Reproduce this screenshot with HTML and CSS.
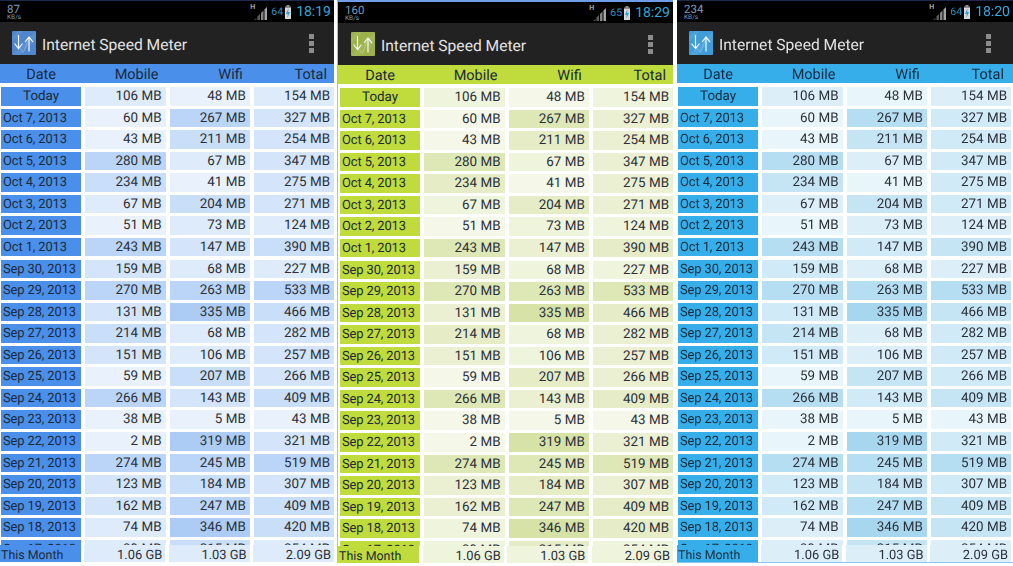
FILE: index.html
```html
<!DOCTYPE html>
<html lang="en">
<head>
<meta charset="utf-8">
<title>Internet Speed Meter</title>
<link rel="stylesheet" href="styles.css">
</head>
<body>
<svg class="defs" width="0" height="0" aria-hidden="true">
  <symbol id="app" viewBox="0 0 24 24">
    <rect class="app-bg" width="24" height="24" rx="1"/>
    <path class="app-tex" d="M0 24 24 0V8L8 24zM0 6 6 0h5L0 11z"/>
    <path class="app-thin" d="M6.500 16 11.500 21.500 17 7 21.500 12"/>
    <path class="app-arrow" d="M6.500 4V17.500M2.500 12.500 6.500 17.500 10.500 12.500M17 20.500V6M13 11 17 6 21 11"/>
  </symbol>
  <symbol id="signal" viewBox="0 0 14 14">
    <path class="sig1" d="M0 14 2.500 11.500V14z"/>
    <path class="sig2" d="M3.500 14V10.500L6 8V14z"/>
    <path class="sig3" d="M7 14V7L9.500 4.500V14z"/>
    <path class="sig4" d="M10.500 14V3.500L13 1V14z"/>
  </symbol>
  <symbol id="battery" viewBox="0 0 6 14">
    <path class="bat-top" d="M0 3V1.500H1.500V0H4.500V1.500H6V3z"/>
    <rect class="bat-body" y="3" width="6" height="11"/>
    <path class="bat-bolt" d="M3.500 3 1 9H2.800L2.300 13 5 7H3.200z"/>
  </symbol>
</svg>

<main class="screens">

<section class="phone theme-blue">
  <div class="status"><div class="speed"><b>87</b><small>KB/s</small></div><div class="status-right"><span class="net">H</span><svg class="signal"><use href="#signal"/></svg><span class="pct">64</span><svg class="battery"><use href="#battery"/></svg><span class="clock">18:19</span></div></div>
  <header class="bar"><svg class="app-icon"><use href="#app"/></svg><h1>Internet Speed Meter</h1><div class="more"><i></i><i></i><i></i></div></header>
  <div class="cols"><span class="c-date">Date</span><span>Mobile</span><span>Wifi</span><span>Total</span></div>
  <div class="list">
    <div class="row"><span class="d today">Today</span><span class="l2">106 MB</span><span class="l1">48 MB</span><span class="l2">154 MB</span></div>
    <div class="row"><span class="d">Oct 7, 2013</span><span class="l1">60 MB</span><span class="l5">267 MB</span><span class="l3">327 MB</span></div>
    <div class="row"><span class="d">Oct 6, 2013</span><span class="l1">43 MB</span><span class="l4">211 MB</span><span class="l3">254 MB</span></div>
    <div class="row"><span class="d">Oct 5, 2013</span><span class="l5">280 MB</span><span class="l2">67 MB</span><span class="l3">347 MB</span></div>
    <div class="row"><span class="d">Oct 4, 2013</span><span class="l4">234 MB</span><span class="l1">41 MB</span><span class="l3">275 MB</span></div>
    <div class="row"><span class="d">Oct 3, 2013</span><span class="l2">67 MB</span><span class="l4">204 MB</span><span class="l3">271 MB</span></div>
    <div class="row"><span class="d">Oct 2, 2013</span><span class="l1">51 MB</span><span class="l2">73 MB</span><span class="l2">124 MB</span></div>
    <div class="row"><span class="d">Oct 1, 2013</span><span class="l5">243 MB</span><span class="l3">147 MB</span><span class="l4">390 MB</span></div>
    <div class="row"><span class="d">Sep 30, 2013</span><span class="l3">159 MB</span><span class="l2">68 MB</span><span class="l2">227 MB</span></div>
    <div class="row"><span class="d">Sep 29, 2013</span><span class="l5">270 MB</span><span class="l5">263 MB</span><span class="l5">533 MB</span></div>
    <div class="row"><span class="d">Sep 28, 2013</span><span class="l3">131 MB</span><span class="l6">335 MB</span><span class="l4">466 MB</span></div>
    <div class="row"><span class="d">Sep 27, 2013</span><span class="l4">214 MB</span><span class="l2">68 MB</span><span class="l3">282 MB</span></div>
    <div class="row"><span class="d">Sep 26, 2013</span><span class="l3">151 MB</span><span class="l2">106 MB</span><span class="l3">257 MB</span></div>
    <div class="row"><span class="d">Sep 25, 2013</span><span class="l1">59 MB</span><span class="l4">207 MB</span><span class="l3">266 MB</span></div>
    <div class="row"><span class="d">Sep 24, 2013</span><span class="l5">266 MB</span><span class="l3">143 MB</span><span class="l4">409 MB</span></div>
    <div class="row"><span class="d">Sep 23, 2013</span><span class="l1">38 MB</span><span class="l1">5 MB</span><span class="l1">43 MB</span></div>
    <div class="row"><span class="d">Sep 22, 2013</span><span class="l1">2 MB</span><span class="l6">319 MB</span><span class="l3">321 MB</span></div>
    <div class="row"><span class="d">Sep 21, 2013</span><span class="l5">274 MB</span><span class="l5">245 MB</span><span class="l5">519 MB</span></div>
    <div class="row"><span class="d">Sep 20, 2013</span><span class="l3">123 MB</span><span class="l4">184 MB</span><span class="l3">307 MB</span></div>
    <div class="row"><span class="d">Sep 19, 2013</span><span class="l3">162 MB</span><span class="l5">247 MB</span><span class="l4">409 MB</span></div>
    <div class="row"><span class="d">Sep 18, 2013</span><span class="l2">74 MB</span><span class="l6">346 MB</span><span class="l4">420 MB</span></div>
    <div class="row"><span class="d">Sep 17, 2013</span><span class="l2">39 MB</span><span class="l4">215 MB</span><span class="l2">254 MB</span></div>
  </div>
  <footer class="sum"><span class="d">This Month</span><span>1.06 GB</span><span>1.03 GB</span><span>2.09 GB</span></footer>
</section>

<section class="phone theme-green">
  <div class="status"><div class="speed"><b>160</b><small>KB/s</small></div><div class="status-right"><span class="net">H</span><svg class="signal"><use href="#signal"/></svg><span class="pct">65</span><svg class="battery"><use href="#battery"/></svg><span class="clock">18:29</span></div></div>
  <header class="bar"><svg class="app-icon"><use href="#app"/></svg><h1>Internet Speed Meter</h1><div class="more"><i></i><i></i><i></i></div></header>
  <div class="cols"><span class="c-date">Date</span><span>Mobile</span><span>Wifi</span><span>Total</span></div>
  <div class="list">
    <div class="row"><span class="d today">Today</span><span class="l2">106 MB</span><span class="l1">48 MB</span><span class="l2">154 MB</span></div>
    <div class="row"><span class="d">Oct 7, 2013</span><span class="l1">60 MB</span><span class="l5">267 MB</span><span class="l3">327 MB</span></div>
    <div class="row"><span class="d">Oct 6, 2013</span><span class="l1">43 MB</span><span class="l4">211 MB</span><span class="l3">254 MB</span></div>
    <div class="row"><span class="d">Oct 5, 2013</span><span class="l5">280 MB</span><span class="l2">67 MB</span><span class="l3">347 MB</span></div>
    <div class="row"><span class="d">Oct 4, 2013</span><span class="l4">234 MB</span><span class="l1">41 MB</span><span class="l3">275 MB</span></div>
    <div class="row"><span class="d">Oct 3, 2013</span><span class="l2">67 MB</span><span class="l4">204 MB</span><span class="l3">271 MB</span></div>
    <div class="row"><span class="d">Oct 2, 2013</span><span class="l1">51 MB</span><span class="l2">73 MB</span><span class="l2">124 MB</span></div>
    <div class="row"><span class="d">Oct 1, 2013</span><span class="l5">243 MB</span><span class="l3">147 MB</span><span class="l4">390 MB</span></div>
    <div class="row"><span class="d">Sep 30, 2013</span><span class="l3">159 MB</span><span class="l2">68 MB</span><span class="l2">227 MB</span></div>
    <div class="row"><span class="d">Sep 29, 2013</span><span class="l5">270 MB</span><span class="l5">263 MB</span><span class="l5">533 MB</span></div>
    <div class="row"><span class="d">Sep 28, 2013</span><span class="l3">131 MB</span><span class="l6">335 MB</span><span class="l4">466 MB</span></div>
    <div class="row"><span class="d">Sep 27, 2013</span><span class="l4">214 MB</span><span class="l2">68 MB</span><span class="l3">282 MB</span></div>
    <div class="row"><span class="d">Sep 26, 2013</span><span class="l3">151 MB</span><span class="l2">106 MB</span><span class="l3">257 MB</span></div>
    <div class="row"><span class="d">Sep 25, 2013</span><span class="l1">59 MB</span><span class="l4">207 MB</span><span class="l3">266 MB</span></div>
    <div class="row"><span class="d">Sep 24, 2013</span><span class="l5">266 MB</span><span class="l3">143 MB</span><span class="l4">409 MB</span></div>
    <div class="row"><span class="d">Sep 23, 2013</span><span class="l1">38 MB</span><span class="l1">5 MB</span><span class="l1">43 MB</span></div>
    <div class="row"><span class="d">Sep 22, 2013</span><span class="l1">2 MB</span><span class="l6">319 MB</span><span class="l3">321 MB</span></div>
    <div class="row"><span class="d">Sep 21, 2013</span><span class="l5">274 MB</span><span class="l5">245 MB</span><span class="l5">519 MB</span></div>
    <div class="row"><span class="d">Sep 20, 2013</span><span class="l3">123 MB</span><span class="l4">184 MB</span><span class="l3">307 MB</span></div>
    <div class="row"><span class="d">Sep 19, 2013</span><span class="l3">162 MB</span><span class="l5">247 MB</span><span class="l4">409 MB</span></div>
    <div class="row"><span class="d">Sep 18, 2013</span><span class="l2">74 MB</span><span class="l6">346 MB</span><span class="l4">420 MB</span></div>
    <div class="row"><span class="d">Sep 17, 2013</span><span class="l2">39 MB</span><span class="l4">215 MB</span><span class="l2">254 MB</span></div>
  </div>
  <footer class="sum"><span class="d">This Month</span><span>1.06 GB</span><span>1.03 GB</span><span>2.09 GB</span></footer>
</section>

<section class="phone theme-sky">
  <div class="status"><div class="speed"><b>234</b><small>KB/s</small></div><div class="status-right"><span class="net">H</span><svg class="signal"><use href="#signal"/></svg><span class="pct">64</span><svg class="battery"><use href="#battery"/></svg><span class="clock">18:20</span></div></div>
  <header class="bar"><svg class="app-icon"><use href="#app"/></svg><h1>Internet Speed Meter</h1><div class="more"><i></i><i></i><i></i></div></header>
  <div class="cols"><span class="c-date">Date</span><span>Mobile</span><span>Wifi</span><span>Total</span></div>
  <div class="list">
    <div class="row"><span class="d today">Today</span><span class="l2">106 MB</span><span class="l1">48 MB</span><span class="l2">154 MB</span></div>
    <div class="row"><span class="d">Oct 7, 2013</span><span class="l1">60 MB</span><span class="l5">267 MB</span><span class="l3">327 MB</span></div>
    <div class="row"><span class="d">Oct 6, 2013</span><span class="l1">43 MB</span><span class="l4">211 MB</span><span class="l3">254 MB</span></div>
    <div class="row"><span class="d">Oct 5, 2013</span><span class="l5">280 MB</span><span class="l2">67 MB</span><span class="l3">347 MB</span></div>
    <div class="row"><span class="d">Oct 4, 2013</span><span class="l4">234 MB</span><span class="l1">41 MB</span><span class="l3">275 MB</span></div>
    <div class="row"><span class="d">Oct 3, 2013</span><span class="l2">67 MB</span><span class="l4">204 MB</span><span class="l3">271 MB</span></div>
    <div class="row"><span class="d">Oct 2, 2013</span><span class="l1">51 MB</span><span class="l2">73 MB</span><span class="l2">124 MB</span></div>
    <div class="row"><span class="d">Oct 1, 2013</span><span class="l5">243 MB</span><span class="l3">147 MB</span><span class="l4">390 MB</span></div>
    <div class="row"><span class="d">Sep 30, 2013</span><span class="l3">159 MB</span><span class="l2">68 MB</span><span class="l2">227 MB</span></div>
    <div class="row"><span class="d">Sep 29, 2013</span><span class="l5">270 MB</span><span class="l5">263 MB</span><span class="l5">533 MB</span></div>
    <div class="row"><span class="d">Sep 28, 2013</span><span class="l3">131 MB</span><span class="l6">335 MB</span><span class="l4">466 MB</span></div>
    <div class="row"><span class="d">Sep 27, 2013</span><span class="l4">214 MB</span><span class="l2">68 MB</span><span class="l3">282 MB</span></div>
    <div class="row"><span class="d">Sep 26, 2013</span><span class="l3">151 MB</span><span class="l2">106 MB</span><span class="l3">257 MB</span></div>
    <div class="row"><span class="d">Sep 25, 2013</span><span class="l1">59 MB</span><span class="l4">207 MB</span><span class="l3">266 MB</span></div>
    <div class="row"><span class="d">Sep 24, 2013</span><span class="l5">266 MB</span><span class="l3">143 MB</span><span class="l4">409 MB</span></div>
    <div class="row"><span class="d">Sep 23, 2013</span><span class="l1">38 MB</span><span class="l1">5 MB</span><span class="l1">43 MB</span></div>
    <div class="row"><span class="d">Sep 22, 2013</span><span class="l1">2 MB</span><span class="l6">319 MB</span><span class="l3">321 MB</span></div>
    <div class="row"><span class="d">Sep 21, 2013</span><span class="l5">274 MB</span><span class="l5">245 MB</span><span class="l5">519 MB</span></div>
    <div class="row"><span class="d">Sep 20, 2013</span><span class="l3">123 MB</span><span class="l4">184 MB</span><span class="l3">307 MB</span></div>
    <div class="row"><span class="d">Sep 19, 2013</span><span class="l3">162 MB</span><span class="l5">247 MB</span><span class="l4">409 MB</span></div>
    <div class="row"><span class="d">Sep 18, 2013</span><span class="l2">74 MB</span><span class="l6">346 MB</span><span class="l4">420 MB</span></div>
    <div class="row"><span class="d">Sep 17, 2013</span><span class="l2">39 MB</span><span class="l4">215 MB</span><span class="l2">254 MB</span></div>
  </div>
  <footer class="sum"><span class="d">This Month</span><span>1.06 GB</span><span>1.03 GB</span><span>2.09 GB</span></footer>
</section>

</main>
</body>
</html>
```
FILE: styles.css
```css
* { box-sizing: border-box; }
html, body { margin: 0; height: 566px; overflow: hidden; background: #fff; }
body { font-family: Roboto, "Liberation Sans", sans-serif; color: #2a2f38; text-rendering: geometricPrecision; }
.defs { position: absolute; }

.screens { display: flex; height: 566px; gap: 3px; filter: blur(.25px); }

.phone { display: flex; flex-direction: column; height: 563px; width: 334px; --inset: 1px; --end: 0px; --top: 1px; --tint: var(--main); --dots: 20px; --icon-x: 12px; border-top: var(--top) solid #1b2a4a; background: #fff; }
.theme-blue { --main: #4a90ea; --icon: #4f86cc; height: 562px; }
.theme-green { --main: #bfdc3c; --tint: #a8c040; --icon: #9db14a; width: 336px; --inset: 2px; --top: 2px; --dots: 20px; --icon-x: 13px; border-top-color: #6f9ee6; border-left: 1px solid #9dbcf0; margin-right: 1px; }
.theme-sky { --main: #35aeea; --tint: #3fa8dc; --icon: #3f9cd8; width: 336px; --end: 2px; --dots: 22px; border-bottom: 1px solid #8fc4f0; }

/* status bar */
.status { flex: none; height: 21px; background: #000; display: flex; justify-content: space-between; align-items: center; padding: 0 3px 0 7px; }
.speed { display: flex; flex-direction: column; color: #7d9db8; }
.speed b { font-size: 11.500px; font-weight: 400; line-height: 10px; }
.speed small { font-size: 6.500px; line-height: 6px; }
.status-right { display: flex; align-items: center; height: 21px; }
.net { font-size: 7px; color: #a8a8a8; align-self: flex-start; margin-top: 2px; font-weight: 700; }
.signal { width: 14px; height: 14px; margin: 2px 3px 0 -1px; }
.sig1 { fill: #3c3c3c; }
.sig2 { fill: #5c5c5c; }
.sig3 { fill: #858585; }
.sig4 { fill: #a4a4a4; }
.theme-green .sig3, .theme-green .sig4 { fill: #4c4c4c; }
.pct { font-size: 10.500px; color: #2f8fbf; margin-right: 2px; }
.battery { width: 6px; height: 14px; margin: 1px 5px 0 0; }
.bat-top { fill: #8d8d8d; }
.bat-body { fill: #d8d8d8; }
.bat-bolt { fill: #2a9fd6; }
.clock { font-size: 14px; color: #33a8dc; }

/* action bar */
.bar { flex: none; height: 42px; background: #222; display: flex; align-items: center; padding-left: var(--icon-x); color: #e4e4e4; }
.app-icon { width: 24px; height: 24px; flex: none; }
.app-bg { fill: var(--icon); }
.app-tex { fill: #fff; opacity: .08; }
.app-thin { fill: none; stroke: #fff; stroke-width: .6; opacity: .4; }
.app-arrow { fill: none; stroke: #f4f8ff; stroke-width: 1.200; }
.bar h1 { margin: 4px 0 0 6px; font-size: 15.600px; font-weight: 400; line-height: 24px; flex: 1; }
.more { display: flex; flex-direction: column; gap: 2px; margin-right: var(--dots); }
.more i { display: block; width: 5px; height: 5px; background: #8c8c8c; }

/* column titles */
.cols { flex: none; height: 19px; background: var(--main); display: grid; grid-template-columns: repeat(4, 1fr); column-gap: 4px; padding: 0 var(--end) 0 var(--inset); font-size: 14.500px; line-height: 21px; text-align: right; color: #1a2a40; }
.cols span { padding-right: 7px; }
.cols .c-date { text-align: center; padding-right: 0; }

/* rows */
.list { flex: 1; min-height: 0; overflow: hidden; padding: 4px var(--end) 0 var(--inset); }
.row { display: grid; grid-template-columns: repeat(4, 1fr); column-gap: 4px; height: 18.500px; margin-bottom: 3.070px; font-size: 13.400px; line-height: 20px; text-align: right; }
.row span { padding-right: 4px; white-space: nowrap; overflow: hidden; }
.row .d { background: var(--main); text-align: left; padding: 0 0 0 2px; color: #1d2a3a; font-size: 12.900px; letter-spacing: -.1px; }
.row .today { text-align: center; padding: 0; font-size: 13.400px; letter-spacing: 0; }
.l1 { background: color-mix(in srgb, var(--tint) 12%, #fff); }
.l2 { background: color-mix(in srgb, var(--tint) 18%, #fff); }
.l3 { background: color-mix(in srgb, var(--tint) 24%, #fff); }
.l4 { background: color-mix(in srgb, var(--tint) 30%, #fff); }
.l5 { background: color-mix(in srgb, var(--tint) 38%, #fff); }
.l6 { background: color-mix(in srgb, var(--tint) 46%, #fff); }

/* month total */
.sum { flex: none; height: 17px; display: grid; grid-template-columns: repeat(4, 1fr); column-gap: 3.500px; padding-right: var(--end); font-size: 12.900px; line-height: 21px; text-align: right; background: #fff; }
.sum span { background: color-mix(in srgb, var(--tint) 18%, #fff); padding-right: 3px; white-space: nowrap; overflow: hidden; }
.sum .d { background: var(--main); text-align: left; padding: 0 0 0 1px; color: #1d2a3a; font-size: 12.400px; }
```
